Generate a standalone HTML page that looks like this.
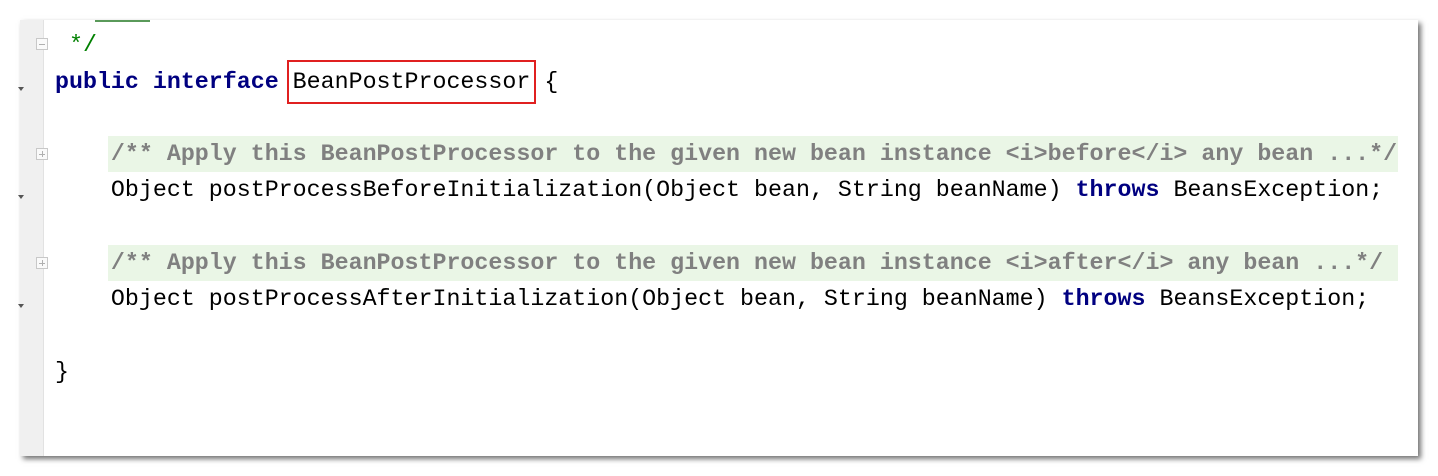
<!DOCTYPE html>
<html><head><meta charset="utf-8"><style>
html,body{margin:0;padding:0;background:#fff;width:1438px;height:476px;overflow:hidden;position:relative}
.panel{position:absolute;left:20px;top:20px;width:1398px;height:436px;background:#fff;box-shadow:3px 3px 5px rgba(0,0,0,.55)}
.gutter{position:absolute;left:20px;top:20px;width:23px;height:436px;background:#f0f0f0;border-right:1px solid #e2e2e2}
.l{position:absolute;left:55px;font-family:"Liberation Mono",monospace;font-size:23.3px;white-space:pre;color:#000;line-height:30px}
.k{color:#000080;font-weight:bold}
.c{color:#808080;font-weight:bold}
.g{color:#008000}
.band{position:absolute;left:108px;width:1290px;height:36px;background:#eaf6e6}
.box{position:absolute;left:287px;top:60px;width:249px;height:44px;border:2px solid #e02020;box-sizing:border-box}
.fold{position:absolute;left:36px;width:12px;height:12px;border:1px solid #c8c8c8;background:#fafafa;box-sizing:border-box}
.fold:before{content:"";position:absolute;left:2px;right:2px;top:5px;height:1px;background:#b0b0b0}
.plus:after{content:"";position:absolute;top:2px;bottom:2px;left:5px;width:1px;background:#b0b0b0}
.tri{position:absolute;left:18px;width:0;height:0;border-left:3px solid transparent;border-right:3px solid transparent;border-top:4px solid #555}
</style></head><body>
<div class="panel"></div>
<div class="gutter"></div>
<div class="fold" style="top:38px"></div>
<div class="fold plus" style="top:148px"></div>
<div class="fold plus" style="top:257px"></div>
<div class="tri" style="top:87px"></div>
<div class="tri" style="top:195px"></div>
<div class="tri" style="top:304px"></div>
<div style="position:absolute;left:95px;top:20px;width:55px;height:2px;background:#5a9a5a"></div>
<div class="band" style="top:136px"></div>
<div class="band" style="top:245px"></div>
<div class="l g" style="top:30px"> */</div>
<div class="l" style="top:67px"><span class="k">public interface</span> BeanPostProcessor {</div>
<div class="box"></div>
<div class="l c" style="top:139px">    /** Apply this BeanPostProcessor to the given new bean instance &lt;i&gt;before&lt;/i&gt; any bean ...*/</div>
<div class="l" style="top:175px">    Object postProcessBeforeInitialization(Object bean, String beanName) <span class="k">throws</span> BeansException;</div>
<div class="l c" style="top:248px">    /** Apply this BeanPostProcessor to the given new bean instance &lt;i&gt;after&lt;/i&gt; any bean ...*/</div>
<div class="l" style="top:284px">    Object postProcessAfterInitialization(Object bean, String beanName) <span class="k">throws</span> BeansException;</div>
<div class="l" style="top:357px">}</div>
</body></html>
